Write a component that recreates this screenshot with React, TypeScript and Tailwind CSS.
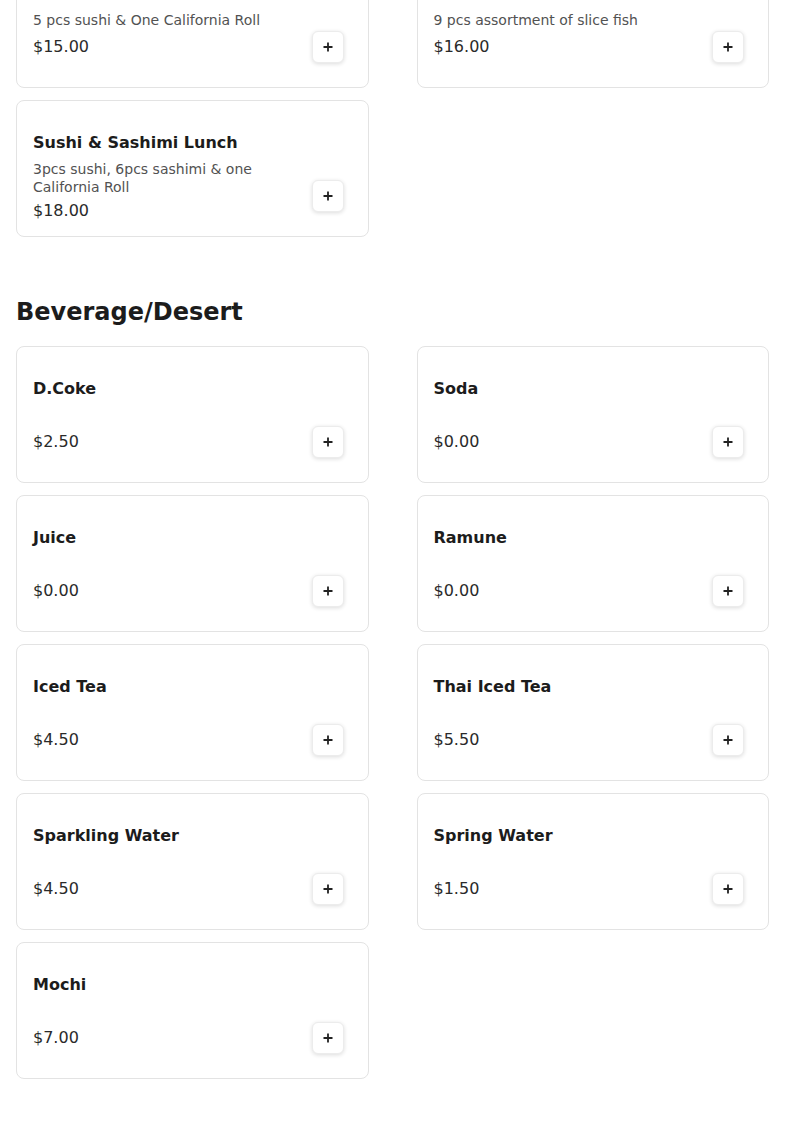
import React from "react";

type Item = {
  name: string;
  desc?: string;
  price: number;
};

const lunch: Item[] = [
  { name: "Sushi Lunch", desc: "5 pcs sushi & One California Roll", price: 15 },
  { name: "Sashimi Lunch", desc: "9 pcs assortment of slice fish", price: 16 },
  { name: "Sushi & Sashimi Lunch", desc: "3pcs sushi, 6pcs sashimi & one California Roll", price: 18 },
];

const drinks: Item[] = [
  { name: "D.Coke", price: 2.5 },
  { name: "Soda", price: 0 },
  { name: "Juice", price: 0 },
  { name: "Ramune", price: 0 },
  { name: "Iced Tea", price: 4.5 },
  { name: "Thai Iced Tea", price: 5.5 },
  { name: "Sparkling Water", price: 4.5 },
  { name: "Spring Water", price: 1.5 },
  { name: "Mochi", price: 7 },
];

function PlusIcon() {
  return (
    <svg width="10" height="10" viewBox="0 0 10 10" fill="none">
      <path d="M5 0.5v9M0.5 5h9" stroke="#222" strokeWidth="1.8" />
    </svg>
  );
}

function MenuCard({ item }: { item: Item }) {
  return (
    <div className="relative h-[137px] rounded-lg border border-[#e3e3e3] bg-white">
      <div className="flex h-full flex-col justify-between pb-[28px] pl-4 pr-[72px] pt-[30px]">
        <div>
          <h3 className="text-base font-bold leading-6 text-[#1c1c1c]">
            {item.name}
          </h3>
          {item.desc && (
            <p className="mt-[6px] text-sm leading-[17.5px] text-[#525252]">
              {item.desc}
            </p>
          )}
        </div>
        <p className="mt-[3px] text-base leading-6 text-[#2a2a2a]">
          ${item.price.toFixed(2)}
        </p>
      </div>

      <button className="absolute bottom-6 right-6 flex h-8 w-8 items-center justify-center rounded-md border border-[#ececec] bg-white shadow-[0_1px_4px_rgba(0,0,0,0.14)]">
        <PlusIcon />
      </button>
    </div>
  );
}

export default function App() {
  return (
    <div
      className="min-h-screen bg-white px-4 pb-12"
      style={{ fontFamily: '"DejaVu Sans", Verdana, sans-serif' }}
    >
      <div className="-mt-[49px] grid grid-cols-2 gap-x-12 gap-y-3">
        {lunch.map((item) => (
          <MenuCard key={item.name} item={item} />
        ))}
      </div>

      <h2 className="mb-[18px] mt-[59px] text-2xl font-bold leading-8 text-[#1c1c1c]">
        Beverage/Desert
      </h2>

      <div className="grid grid-cols-2 gap-x-12 gap-y-3">
        {drinks.map((item) => (
          <MenuCard key={item.name} item={item} />
        ))}
      </div>
    </div>
  );
}
